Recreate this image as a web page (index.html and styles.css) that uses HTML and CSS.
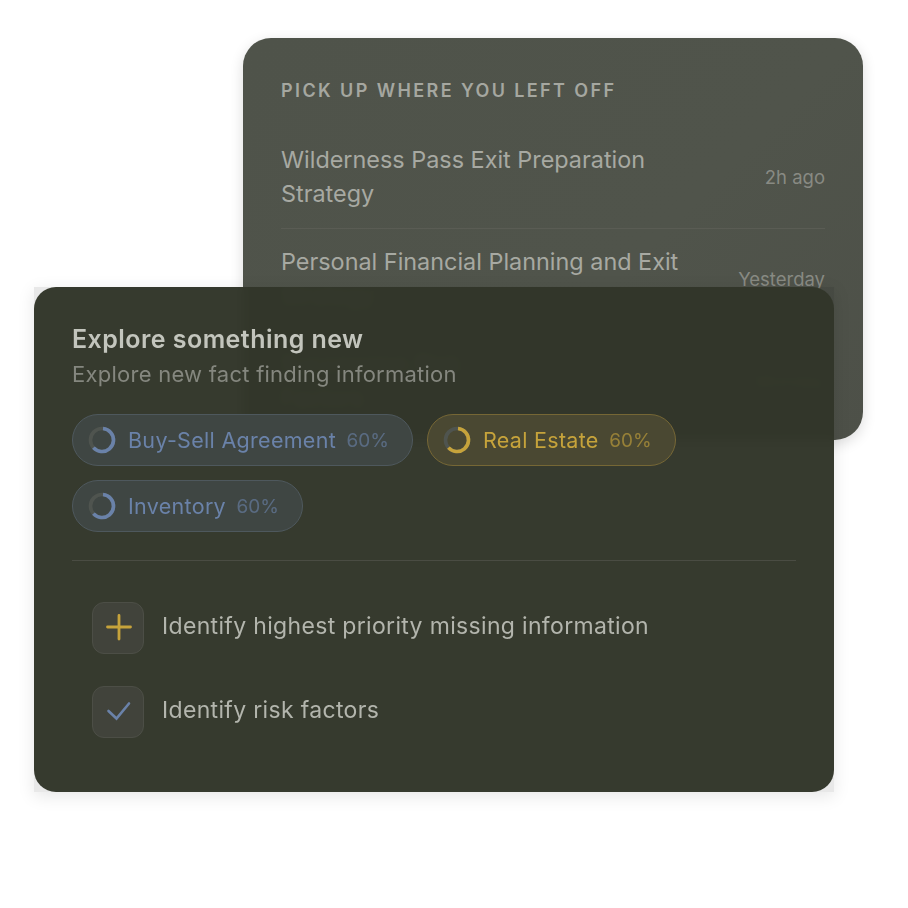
FILE: index.html
```html
<!DOCTYPE html>
<html>
<head>
  <meta charset="UTF-8" />
  <title>Explore</title>
  <link rel="stylesheet" href="styles.css">
</head>
<body>
  <!-- back card, front card is pulled up over it -->
  <section class="recentCard">
    <h2 class="recentTitle">PICK UP WHERE YOU LEFT OFF</h2>
    <div class="recentRow">
      <span class="recentName">Wilderness Pass Exit Preparation Strategy</span>
      <span class="recentTime">2h ago</span>
    </div>
    <div class="recentRow">
      <span class="recentName">Personal Financial Planning and Exit Strategy</span>
      <span class="recentTime">Yesterday</span>
    </div>
    <div class="recentRow">
      <span class="recentName">Succession Risk<br>Factors</span>
      <span class="recentTime">Monday</span>
    </div>
  </section>

  <div class="exploreWrap">
    <section class="exploreCard">
      <h2 class="exploreTitle">Explore something new</h2>
      <p class="exploreSub">Explore new fact finding information</p>

      <div class="chips">
        <div class="chip chipBlue">
          <svg class="ring" viewBox="0 0 28 28"><circle class="ringTrack" cx="14" cy="14" r="11.5"/><circle class="ringValue" cx="14" cy="14" r="11.5" pathLength="100" stroke-dasharray="62 100" transform="rotate(-85 14 14)"/></svg>
          <span class="chipName">Buy-Sell Agreement</span>
          <span class="chipPct">60%</span>
        </div>
        <div class="chip chipGold">
          <svg class="ring" viewBox="0 0 28 28"><circle class="ringTrack" cx="14" cy="14" r="11.5"/><circle class="ringValue" cx="14" cy="14" r="11.5" pathLength="100" stroke-dasharray="62 100" transform="rotate(-85 14 14)"/></svg>
          <span class="chipName">Real Estate</span>
          <span class="chipPct">60%</span>
        </div>
        <div class="chip chipBlue">
          <svg class="ring" viewBox="0 0 28 28"><circle class="ringTrack" cx="14" cy="14" r="11.5"/><circle class="ringValue" cx="14" cy="14" r="11.5" pathLength="100" stroke-dasharray="62 100" transform="rotate(-85 14 14)"/></svg>
          <span class="chipName">Inventory</span>
          <span class="chipPct">60%</span>
        </div>
      </div>

      <div class="actions">
        <div class="action">
          <span class="actionIcon">
            <svg width="28" height="28" viewBox="0 0 28 28"><path class="plus" d="M15 1.5V25M3.5 13H26.5"/></svg>
          </span>
          <span class="actionText">Identify highest priority missing information</span>
        </div>
        <div class="action">
          <span class="actionIcon">
            <svg width="28" height="28" viewBox="0 0 28 28"><path class="check" d="M4.5 13L12.5 20.5L25 5.5"/></svg>
          </span>
          <span class="actionText">Identify risk factors</span>
        </div>
      </div>
    </section>
  </div>
</body>
</html>
```

FILE: styles.css
```css
html, body {
  margin: 0;
  background: #fff;
}
body {
  font-family: "Inter", "Liberation Sans", sans-serif;
  height: 908px;
  overflow: hidden;
}
h2, p {
  margin: 0;
}

.recentCard {
  box-sizing: border-box;
  width: 620px;
  height: 402px;
  margin: 38px 0 0 243px;
  padding: 42px 38px 0;
  border-radius: 28px;
  overflow: hidden;
  background: linear-gradient(135deg, #4f534a, #50544b 60%, #4d5048);
  box-shadow: 0 4px 14px rgba(0, 0, 0, 0.14);
}
.recentTitle {
  font-size: 18px;
  line-height: 22px;
  font-weight: 600;
  letter-spacing: 2.4px;
  color: #a5a7a0;
}
.recentRow {
  display: flex;
  align-items: center;
  justify-content: space-between;
  gap: 40px;
  padding: 16px 0 17px;
  border-bottom: 1px solid #5a5c54;
}
.recentTitle + .recentRow {
  margin-top: 25px;
}
.recentName {
  width: 420px;
  font-size: 23.4px;
  line-height: 34px;
  color: #a7a9a2;
}
.recentTime {
  font-size: 18.5px;
  color: #888a83;
}

/* square backing behind the rounded card, shows at the corners */
.exploreWrap {
  position: relative;
  width: 800px;
  height: 505px;
  margin: -153px 0 0 34px;
  background: rgba(0, 0, 0, 0.09);
  box-shadow: 0 4px 16px rgba(0, 0, 0, 0.1);
}
.exploreCard {
  box-sizing: border-box;
  height: 100%;
  padding: 37px 38px 0;
  border-radius: 22px;
  background: rgba(50, 54, 42, 0.98);
  backdrop-filter: blur(4px);
}
.exploreTitle {
  font-size: 25px;
  line-height: 30px;
  font-weight: 600;
  letter-spacing: 0.45px;
  color: #c3c5bd;
}
.exploreSub {
  margin-top: 5px;
  font-size: 22px;
  line-height: 30px;
  letter-spacing: 0.25px;
  color: #85877f;
}

.chips {
  display: flex;
  flex-wrap: wrap;
  gap: 14px;
  margin-top: 25px;
  padding-bottom: 28px;
  border-bottom: 1px solid #4a4c43;
}
.chip {
  box-sizing: border-box;
  display: flex;
  align-items: center;
  height: 52px;
  padding: 0 23px 0 15px;
  border-radius: 26px;
  border: 1.5px solid;
}
.chipBlue {
  background: #3f4643;
  border-color: #4e585d;
  color: #6a82a9;
}
.chipGold {
  background: #4a4832;
  border-color: #766735;
  color: #c6a33b;
}
.ring {
  width: 28px;
  height: 28px;
  margin-right: 12px;
  fill: none;
  stroke-width: 3.6;
}
.ringTrack {
  stroke: #4f544f;
}
.ringValue {
  stroke: currentColor;
}
.chipName {
  font-size: 21.5px;
  letter-spacing: 0.3px;
}
.chipPct {
  margin-left: 10.5px;
  font-size: 19px;
  opacity: 0.62;
}

.actions {
  display: flex;
  flex-direction: column;
  gap: 32px;
  margin-top: 41px;
  padding-left: 20px;
}
.action {
  display: flex;
  align-items: center;
  gap: 18px;
}
.actionIcon {
  box-sizing: border-box;
  display: flex;
  align-items: center;
  justify-content: center;
  width: 52px;
  height: 52px;
  border-radius: 12px;
  border: 1.5px solid #4c4e46;
  background: #41433b;
}
.actionText {
  padding-bottom: 4px;
  font-size: 23px;
  letter-spacing: 0.33px;
  color: #b3b5ad;
}
.plus, .check {
  fill: none;
  stroke-linecap: round;
}
.plus {
  stroke: #c6a33b;
  stroke-width: 2.8;
}
.check {
  stroke: #6a82a9;
  stroke-width: 2.6;
}
```
